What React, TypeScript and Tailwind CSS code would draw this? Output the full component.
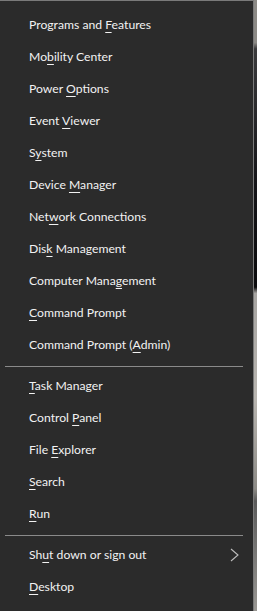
import { Fragment } from 'react'

type Item = { pre: string; key: string; post: string; arrow?: boolean }

const groups: Item[][] = [
  [
    { pre: 'Programs and ', key: 'F', post: 'eatures' },
    { pre: 'Mo', key: 'b', post: 'ility Center' },
    { pre: 'Power ', key: 'O', post: 'ptions' },
    { pre: 'Event ', key: 'V', post: 'iewer' },
    { pre: 'S', key: 'y', post: 'stem' },
    { pre: 'Device ', key: 'M', post: 'anager' },
    { pre: 'Net', key: 'w', post: 'ork Connections' },
    { pre: 'Dis', key: 'k', post: ' Management' },
    { pre: 'Computer Mana', key: 'g', post: 'ement' },
    { pre: '', key: 'C', post: 'ommand Prompt' },
    { pre: 'Command Prompt (', key: 'A', post: 'dmin)' },
  ],
  [
    { pre: '', key: 'T', post: 'ask Manager' },
    { pre: 'Control ', key: 'P', post: 'anel' },
    { pre: 'File ', key: 'E', post: 'xplorer' },
    { pre: '', key: 'S', post: 'earch' },
    { pre: '', key: 'R', post: 'un' },
  ],
  [
    { pre: 'Sh', key: 'u', post: 't down or sign out', arrow: true },
    { pre: '', key: 'D', post: 'esktop' },
  ],
]

function MenuRow({ item }: { item: Item }) {
  return (
    <div className="flex h-8 items-center justify-between pl-[29px] pr-[14px] hover:bg-[#414141]">
      <span>
        {item.pre}
        <u className="underline decoration-1 underline-offset-[3px]">{item.key}</u>
        {item.post}
      </span>
      {item.arrow && (
        <svg width="9" height="14" viewBox="0 0 9 14" fill="none" className="text-[#bdbdbd]">
          <path d="M1 1l7 6-7 6" stroke="currentColor" strokeWidth="1.1" />
        </svg>
      )}
    </div>
  )
}

export default function App() {
  return (
    <div className="flex h-[611px] w-[257px] overflow-hidden bg-[#2b2b2b]">
      <div className="flex w-[254px] flex-col border-t border-r border-[#7a7a7a] bg-[#2b2b2b] pt-[8px] font-['Lato',sans-serif] text-[12.2px] text-[#f2f2f2]">
        {groups.map((g, gi) => (
          <Fragment key={gi}>
            {gi > 0 && <div className="mx-[5px] mb-[3px] mt-[5px] h-px w-[238px] bg-[#8a8a8a]" />}
            {g.map((item) => (
              <MenuRow key={item.pre + item.key + item.post} item={item} />
            ))}
          </Fragment>
        ))}
      </div>
      <div className="w-[3px] bg-[linear-gradient(to_bottom,#8c8a86_0%,#8c8a86_7%,#3a3a3c_8%,#151518_30%,#0b0b0d_47%,#a7a5a2_48%,#b9b6b1_65%,#8d8b86_80%,#5a5a5a_82%,#9a9894_100%)]" />
    </div>
  )
}
